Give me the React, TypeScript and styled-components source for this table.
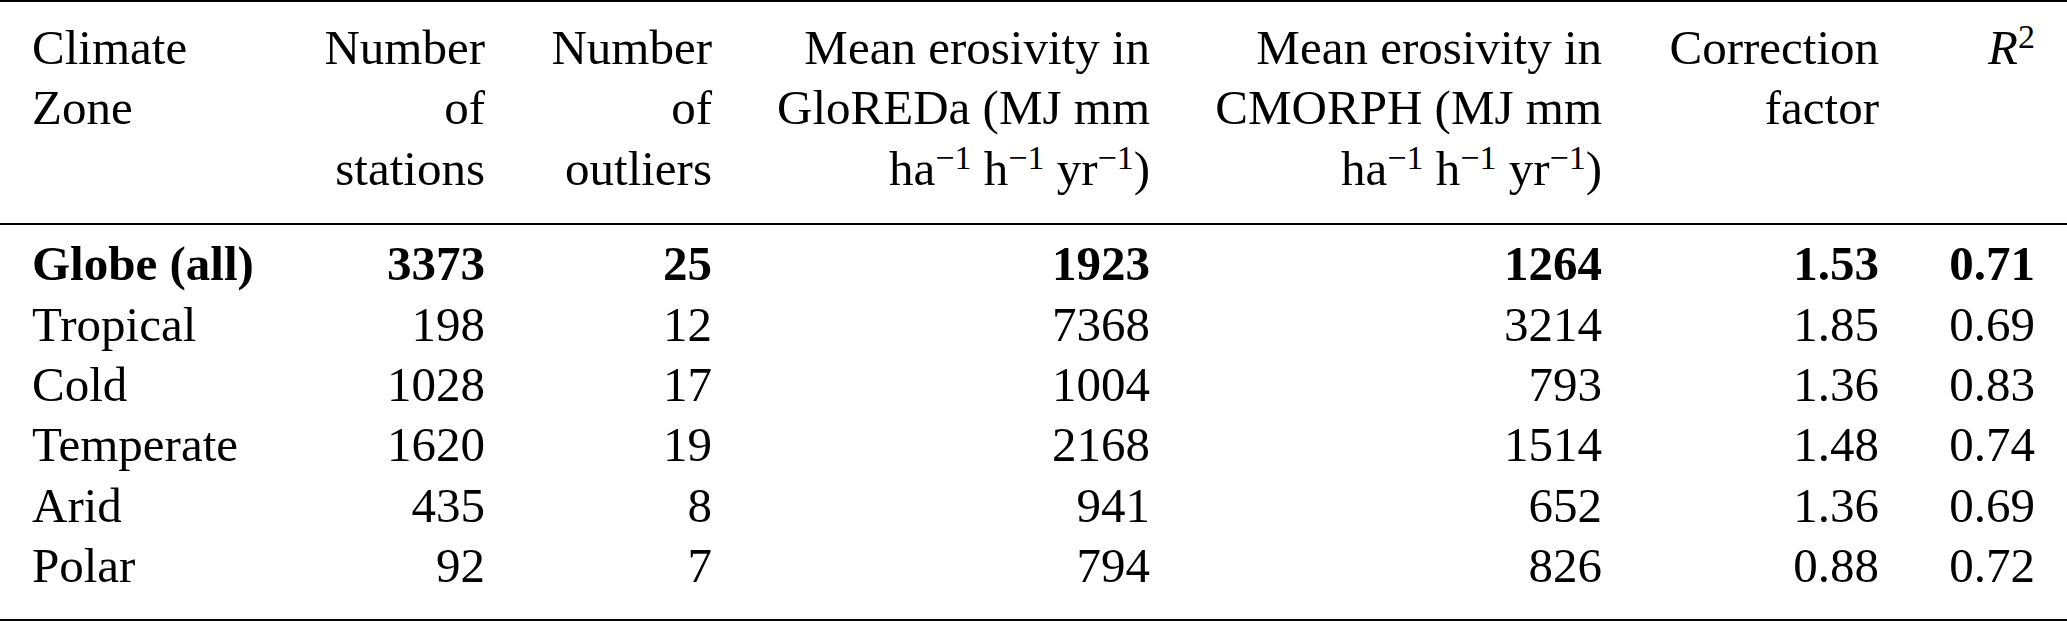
import React from 'react';
import styled, { createGlobalStyle } from 'styled-components';

const GlobalStyle = createGlobalStyle`
html, body {
  margin: 0;
  padding: 0;
  background: #fff;
}
`;

const columns = '290px 227px 227px 438px 452px 277px 156px';

const Frame = styled.div`
width: 2067px;
font-family: "Liberation Serif", serif;
font-size: 49px;
line-height: 60.4px;
color: #000;
border-top: 2px solid #000;
border-bottom: 2px solid #000;
`;

const Head = styled.div`
display: grid;
grid-template-columns: ${columns};
padding: 16px 0 24px;
border-bottom: 2px solid #000;
`;

const Body = styled.div`
display: grid;
grid-template-columns: ${columns};
padding: 9px 0 22px;
`;

const Cell = styled.div<{ $left?: boolean; $bold?: boolean }>`
font-family: "Liberation Serif", serif;
font-weight: ${(p) => (p.$bold ? 'bold' : 'normal')};
text-align: ${(p) => (p.$left ? 'left' : 'right')};
padding: 0 32px;
white-space: nowrap;
`;

const Sup = styled.span`
font-size: 34px;
line-height: 0;
position: relative;
top: -16px;
`;

const Italic = styled.span`
font-style: italic;
`;

const unit = (
    <>
        ha<Sup>−1</Sup> h<Sup>−1</Sup> yr<Sup>−1</Sup>)
    </>
);

const heads: React.ReactNode[] = [
    <>Climate<br />Zone</>,
    <>Number<br />of<br />stations</>,
    <>Number<br />of<br />outliers</>,
    <>Mean erosivity in<br />GloREDa (MJ mm<br />{unit}</>,
    <>Mean erosivity in<br />CMORPH (MJ mm<br />{unit}</>,
    <>Correction<br />factor</>,
    <><Italic>R</Italic><Sup>2</Sup></>,
];

const rows = [
    ['Globe (all)', '3373', '25', '1923', '1264', '1.53', '0.71'],
    ['Tropical', '198', '12', '7368', '3214', '1.85', '0.69'],
    ['Cold', '1028', '17', '1004', '793', '1.36', '0.83'],
    ['Temperate', '1620', '19', '2168', '1514', '1.48', '0.74'],
    ['Arid', '435', '8', '941', '652', '1.36', '0.69'],
    ['Polar', '92', '7', '794', '826', '0.88', '0.72'],
];

const App: React.FunctionComponent = () => {
    return (
        <>
            <GlobalStyle />
            <Frame>
                <Head>
                    {heads.map((h, i) => (
                        <Cell key={i} $left={i === 0}>{h}</Cell>
                    ))}
                </Head>
                <Body>
                    {rows.map((r, i) =>
                        r.map((v, j) => (
                            <Cell key={`${i}-${j}`} $left={j === 0} $bold={i === 0}>{v}</Cell>
                        ))
                    )}
                </Body>
            </Frame>
        </>
    );
};

export default App;
